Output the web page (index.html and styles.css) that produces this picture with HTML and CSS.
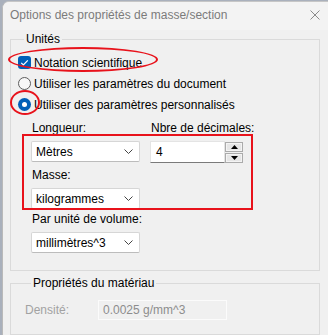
FILE: index.html
```html
<!DOCTYPE html>
<html lang="fr">
<head>
  <meta charset="UTF-8" />
  <title>Options des propriétés de masse/section</title>
  <link rel="stylesheet" href="styles.css">
</head>
<body>

<div class="window">
  <!-- Barre de titre -->
  <div class="titlebar">
    <span class="title">Options des propriétés de masse/section</span>
    <svg class="close" width="10" height="10" viewBox="0 0 10 10">
      <path d="M0.5 0.5 L9.5 9.5 M9.5 0.5 L0.5 9.5" stroke="#8a8a8a" stroke-width="1" fill="none"/>
    </svg>
  </div>

  <div class="content">
    <fieldset class="group units">
      <legend>Unités</legend>

      <div class="option">
        <span class="check">
          <svg width="13" height="13" viewBox="0 0 13 13">
            <path d="M3.2 6.8 L5.4 9 L9.8 4.3" stroke="#fff" stroke-width="1.2" fill="none"/>
          </svg>
        </span>
        Notation scientifique
      </div>
      <div class="option"><span class="radio"></span>Utiliser les paramètres du document</div>
      <div class="option"><span class="radio on"></span>Utiliser des paramètres personnalisés</div>

      <div class="custom">
        <span class="lbl">Longueur:</span>
        <span class="lbl">Nbre de décimales:</span>

        <div class="combo">
          Mètres
          <svg width="9" height="5" viewBox="0 0 9 5"><polyline points="0.5,0.5 4.5,4.5 8.5,0.5" stroke="#444" fill="none"/></svg>
        </div>
        <div class="number">
          <div class="num-input">4</div>
          <div class="spin">
            <div class="spin-btn"><svg width="7" height="4" viewBox="0 0 7 4"><polygon points="3.5,0 7,4 0,4" fill="#000"/></svg></div>
            <div class="spin-btn"><svg width="7" height="4" viewBox="0 0 7 4"><polygon points="0,0 7,0 3.5,4" fill="#000"/></svg></div>
          </div>
        </div>

        <span class="lbl wide">Masse:</span>
        <div class="combo wide-start">
          kilogrammes
          <svg width="9" height="5" viewBox="0 0 9 5"><polyline points="0.5,0.5 4.5,4.5 8.5,0.5" stroke="#444" fill="none"/></svg>
        </div>

        <span class="lbl wide tight">Par unité de volume:</span>
        <div class="combo wide-start">
          millimètres^3
          <svg width="9" height="5" viewBox="0 0 9 5"><polyline points="0.5,0.5 4.5,4.5 8.5,0.5" stroke="#444" fill="none"/></svg>
        </div>
      </div>
    </fieldset>

    <fieldset class="group material">
      <legend>Propriétés du matériau</legend>
      <div class="density">
        <span class="dis-lbl">Densité:</span>
        <div class="dis-field">0.0025 g/mm^3</div>
      </div>
    </fieldset>
  </div>
</div>

<!-- Annotations rouges -->
<span class="mark ellipse"></span>
<span class="mark circle"></span>
<span class="mark box"></span>

</body>
</html>
```

FILE: styles.css
```css
* {
  box-sizing: border-box;
}

body {
  margin: 0;
  font-family: 'Liberation Sans', Arial, sans-serif;
  font-size: 12px;
  color: #000;
  background: #a9b0bc;
  position: relative;
  height: 335px;
  overflow: hidden;
}

.window {
  margin: 1px 0 0 2px;
  border-left: 1px solid #b9b9b9;
  border-top: 1px solid #c6c6c6;
  border-top-left-radius: 7px;
  background: #f0f0f0;
  height: 340px;
  overflow: hidden;
}

/* Barre de titre */
.titlebar {
  height: 28px;
  background: #f3f3f3;
  display: flex;
  align-items: center;
  justify-content: space-between;
  padding: 0 8px 2px 7px;
}

.title {
  color: #7b7b7b;
}

.content {
  padding: 0 8px 0 7px;
}

/* Cadres de groupe */
.group {
  margin: 2px 0 0 0;
  padding: 0;
  border: 1px solid #dadada;
  min-width: 0;
}

.group legend {
  margin-left: 6px;
  padding: 0 2px;
  line-height: 14px;
}

.units {
  padding: 6px 0 17px 7px;
}

.option {
  display: flex;
  align-items: center;
  height: 21px;
  gap: 3px;
}

.check {
  width: 13px;
  height: 13px;
  border-radius: 3px;
  background: #005fb8;
  display: flex;
}

.radio {
  width: 13px;
  height: 13px;
  border-radius: 50%;
  border: 1px solid #5d5d5d;
  background: #f7f7f7;
}

.radio.on {
  border: none;
  background: #005fb8;
  display: flex;
  align-items: center;
  justify-content: center;
}

.radio.on::after {
  content: "";
  width: 5px;
  height: 5px;
  border-radius: 50%;
  background: #fff;
}

/* Paramètres personnalisés */
.custom {
  display: grid;
  grid-template-columns: 109px 93px;
  column-gap: 10px;
  margin: 6px 0 0 13px;
}

.lbl {
  line-height: 14px;
  padding-left: 1px;
  margin-bottom: 6px;
  white-space: nowrap;
}

.wide {
  grid-column: 1 / 3;
  margin-top: 5px;
}

.wide.tight {
  margin-top: 3px;
}

.combo {
  height: 21px;
  background: #fff;
  border: 1px solid #d6d6d6;
  border-bottom-color: #bcbcbc;
  border-radius: 2px;
  display: flex;
  align-items: center;
  justify-content: space-between;
  padding: 0 6px 0 4px;
}

.wide-start {
  grid-column: 1 / 2;
}

.number {
  display: flex;
  height: 22px;
}

.num-input {
  width: 75px;
  background: #fff;
  border: 1px solid #e4e4e4;
  border-bottom-color: #7a7a7a;
  padding: 3px 0 0 5px;
}

.spin {
  width: 18px;
  display: flex;
  flex-direction: column;
  gap: 1px;
  padding-top: 1px;
}

.spin-btn {
  flex: 1;
  border: 1px solid #ababab;
  background: #e6e6e6;
  box-shadow: inset 0 0 0 1px #f4f4f4;
  display: flex;
  align-items: center;
  justify-content: center;
}

/* Propriétés du matériau */
.material {
  margin-top: 5px;
  padding: 10px 0 14px 14px;
}

.density {
  display: flex;
  align-items: center;
}

.dis-lbl {
  width: 73px;
  color: #a2a2a2;
}

.dis-field {
  width: 129px;
  height: 20px;
  border: 1px solid #fbfbfb;
  color: #8d8d8d;
  padding: 2px 0 0 4px;
}

/* Annotations */
.mark {
  position: absolute;
  border: 2px solid #e8121b;
}

.ellipse {
  left: 8px;
  top: 47px;
  width: 150px;
  height: 25px;
  border-radius: 50%;
}

.circle {
  left: 10px;
  top: 90px;
  width: 30px;
  height: 25px;
  border-radius: 50%;
}

.box {
  left: 22px;
  top: 134px;
  width: 231px;
  height: 76px;
}
```
